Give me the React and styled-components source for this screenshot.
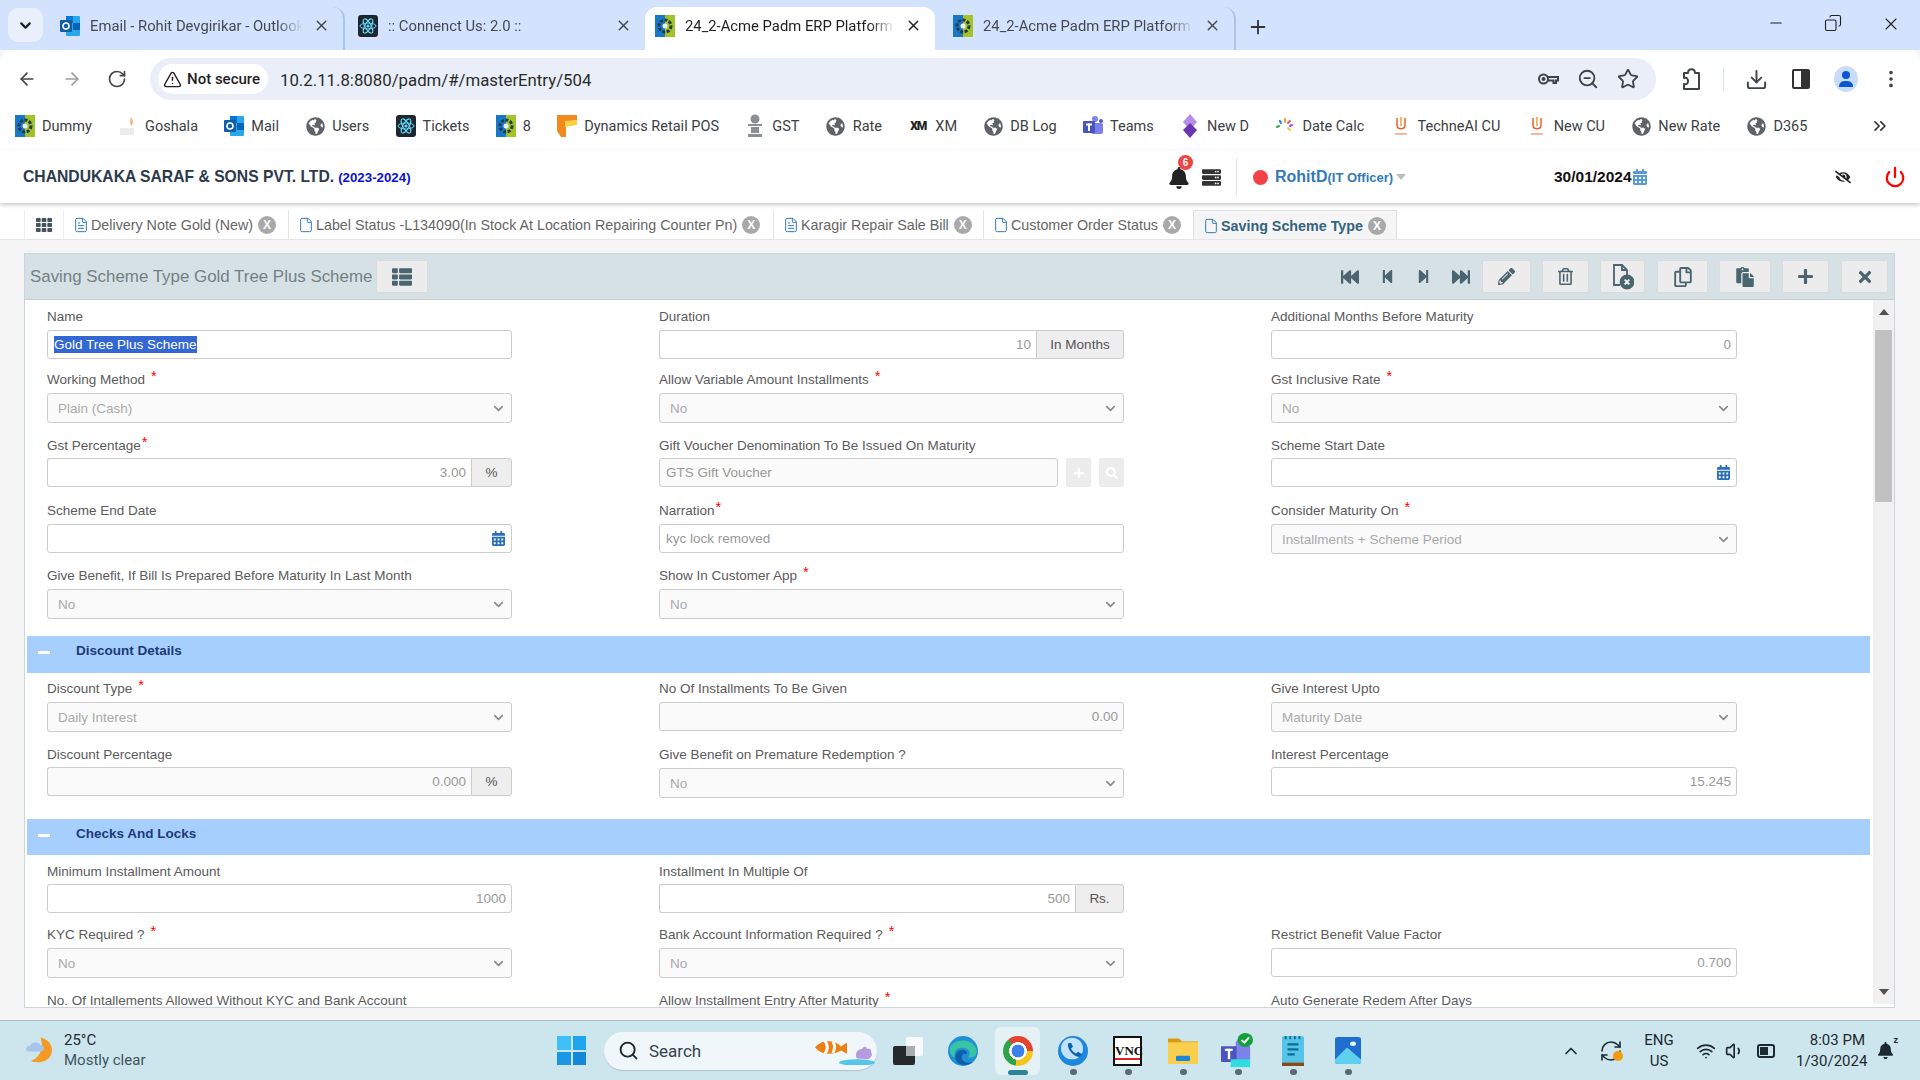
import React from "react";
import styled, { createGlobalStyle } from "styled-components";
import {
  ArrowLeft, ArrowRight, RotateCw, ZoomOut, Star, Download, EllipsisVertical,
  ChevronDown, X, Plus, Minus, Copy, TriangleAlert, ChevronsRight, File, FileText, Power,
  ChevronUp, Wifi, Volume1, Search as SearchGlyph, RefreshCw,
} from "lucide-react";
import {
  FaFastBackward, FaStepBackward, FaStepForward, FaFastForward, FaPencilAlt, FaRegTrashAlt,
  FaRegCopy, FaPaste, FaPlus, FaTimes, FaThList, FaTh, FaBell, FaEyeSlash, FaCalendarAlt,
  FaGlobeAmericas, FaSearch, FaServer,
} from "react-icons/fa";

const GlobalStyle = createGlobalStyle`
  html, body { margin: 0; padding: 0; width: 1920px; height: 1080px; overflow: hidden; background: #f5f5f5; }
  * { box-sizing: border-box; }
  body { font-family: "Liberation Sans", Arial, sans-serif; }
`;

const Page = styled.div`
  width: 1920px;
  height: 1080px;
  display: flex;
  flex-direction: column;
  overflow: hidden;
`;

/* ---------- browser chrome ---------- */

const TabStrip = styled.div`
  height: 50px;
  flex: none;
  background: #d3e3fd;
  display: flex;
  align-items: flex-end;
  font-family: Roboto, sans-serif;
  font-size: 14.8px;
  color: #3c4043;
`;
const TabListButton = styled.div`
  width: 35px;
  height: 34px;
  margin: 0 9px 8px 8px;
  border-radius: 10px;
  background: #e9f0fc;
  display: flex;
  align-items: center;
  justify-content: center;
  color: #1f1f1f;
`;
const BrowserTab = styled.div`
  width: ${(p) => p.$w}px;
  height: 43px;
  flex: none;
  display: flex;
  align-items: center;
  gap: 10px;
  padding: 0 13px 6px ${(p) => p.$pad}px;
  border-radius: 12px 12px 0 0;
  background: ${(p) => (p.$active ? "#fff" : "transparent")};
  color: ${(p) => (p.$active ? "#1f1f1f" : "#45494f")};
  border-right: ${(p) => (p.$sep ? "2px solid #a9c5ef" : "0")};
`;
const BrowserTabTitle = styled.span`
  flex: 1;
  white-space: nowrap;
  overflow: hidden;
  -webkit-mask-image: linear-gradient(to right, #000 88%, transparent);
  mask-image: linear-gradient(to right, #000 88%, transparent);
`;
const NewTab = styled.div`
  margin: 0 0 12px 11px;
  color: #333;
  display: flex;
`;
const WindowControls = styled.div`
  margin-left: auto;
  display: flex;
  gap: 39px;
  padding: 0 19px 16px 0;
  color: #222;
`;
const RestoreIcon = styled(Copy)`
  transform: scaleX(-1);
`;

const Toolbar = styled.div`
  height: 50px;
  flex: none;
  background: #fff;
  border-radius: 12px 12px 0 0;
  display: flex;
  align-items: center;
  padding: 8px 0 0 17px;
  font-family: Roboto, sans-serif;
  color: #444746;
`;
const NavIcons = styled.div`
  display: flex;
  gap: 25px;
  width: 133px;
`;
const Omnibox = styled.div`
  width: 1506px;
  height: 42px;
  border-radius: 21px;
  background: #e9eef8;
  display: flex;
  align-items: center;
  padding: 0 17px 0 8px;
`;
const SecureChip = styled.div`
  width: 110px;
  height: 30px;
  border-radius: 15px;
  background: #fff;
  display: flex;
  align-items: center;
  gap: 5px;
  padding-left: 5px;
  font-size: 15px;
  font-weight: 500;
  color: #1f1f1f;
  white-space: nowrap;
`;
const UrlText = styled.div`
  margin: 1px 0 0 12px;
  font-size: 16.8px;
  color: #2b2b2b;
  flex: 1;
`;
const OmniIcons = styled.div`
  display: flex;
  gap: 18px;
  color: #3f4346;
`;
const ToolbarIcons = styled.div`
  display: flex;
  align-items: center;
  margin-left: 23px;
  gap: 21px;
  color: #3f4346;
`;
const ToolbarSep = styled.div`
  width: 1px;
  height: 24px;
  background: #d7e3f6;
`;
const SidePanelMark = styled.div`
  width: 18px;
  height: 20px;
  margin-left: 3px;
  border: 2px solid #333;
  border-radius: 2px;
  background: linear-gradient(to right, #fff 50%, #333 50%);
`;
const Avatar = styled.div`
  width: 24px;
  height: 26px;
  margin: 0 1px 0 3px;
  border-radius: 50%;
  background: #c8dbfa;
  display: flex;
  align-items: center;
  justify-content: center;
`;

const BookmarkBar = styled.div`
  height: 50px;
  flex: none;
  background: #fff;
  display: flex;
  align-items: center;
  padding: 2px 0 0 15px;
  font-family: Roboto, sans-serif;
  font-size: 14.5px;
  color: #3c4043;
`;
const Bookmark = styled.div`
  display: flex;
  align-items: center;
  gap: 7px;
  margin-right: 26.3px;
  white-space: nowrap;
`;
const BookmarkMark = styled.div`
  width: 20px;
  height: 20px;
  display: flex;
  align-items: center;
  justify-content: center;
  color: #5f6368;
`;
const MoreBookmarks = styled.div`
  margin-left: auto;
  margin-right: 30px;
  display: flex;
  color: #333;
`;

/* ---------- application ---------- */

const AppHeader = styled.header`
  height: 53px;
  flex: none;
  background: #fff;
  box-shadow: 0 2px 4px rgba(0, 0, 0, 0.22);
  position: relative;
  z-index: 2;
  display: flex;
  align-items: center;
  padding-top: 1px;
  & > * {
    flex: none;
  }
`;
const Company = styled.div`
  width: 1168px;
  padding-left: 23px;
  font-size: 15.7px;
  font-weight: 700;
  color: #2d3a4b;
  white-space: nowrap;
`;
const FinYear = styled.span`
  margin-left: 4px;
  font-size: 13.3px;
  color: #0a12d8;
`;
const BellWrap = styled.div`
  position: relative;
  width: 22px;
  display: flex;
  color: #222;
  margin-top: 2px;
`;
const BellBadge = styled.span`
  position: absolute;
  top: -12px;
  left: 10px;
  width: 15px;
  height: 15px;
  border-radius: 50%;
  background: #ef4444;
  color: #fff;
  font-size: 10px;
  font-weight: 700;
  text-align: center;
  line-height: 15px;
`;
const StackIcon = styled(FaServer)`
  margin-left: 12px;
  color: #333;
`;
const HeaderDivider = styled.div`
  width: 1px;
  height: 38px;
  margin: 0 16px 0 15px;
  background: #e6e6e6;
`;
const StatusDot = styled.div`
  width: 15px;
  height: 15px;
  border-radius: 50%;
  background: #f44147;
`;
const UserName = styled.div`
  width: 279px;
  margin-left: 7px;
  display: flex;
  align-items: center;
  white-space: nowrap;
  color: #337ab7;
  font-size: 16px;
  font-weight: 700;
`;
const UserRole = styled.span`
  font-size: 13px;
`;
const Caret = styled.span`
  margin-left: 3px;
  border: 5px solid transparent;
  border-top: 6px solid #bbb;
  border-bottom: 0;
`;
const DateBox = styled.div`
  display: flex;
  align-items: center;
  font-size: 15.5px;
  font-weight: 700;
  color: #111;
  width: 281px;
`;
const DateIcon = styled(FaCalendarAlt)`
  color: #5b9bd5;
`;
const HeaderRight = styled.div`
  display: flex;
  align-items: center;
  gap: 33px;
`;
const EyeIcon = styled(FaEyeSlash)`
  color: #222;
`;

const WorkTabs = styled.nav`
  height: 37px;
  flex: none;
  background: #fff;
  border-bottom: 1px solid #e5e5e5;
  display: flex;
  padding: 7px 0 0 24px;
  font-size: 14.3px;
  color: #666;
`;
const GridCell = styled.div`
  width: 40px;
  display: flex;
  align-items: center;
  justify-content: center;
  border-left: 1px solid #eee;
  border-right: 1px solid #eee;
  color: #44545f;
`;
const WorkTab = styled.div`
  width: ${(p) => p.$w}px;
  flex: none;
  display: flex;
  align-items: center;
  padding: 1px 0 0 11px;
  white-space: nowrap;
  border-right: 1px solid #e5e5e5;
  ${(p) =>
    p.$active &&
    `
    background: #f5f5f5;
    border: 1px solid #e0e0e0;
    border-bottom: 0;
    margin-left: -1px;
    font-weight: 700;
    color: #33637f;
  `}
`;
const WorkTabIcon = styled.span`
  display: flex;
  margin: 0 2px 0 -2px;
  color: #337ab7;
`;
const CloseBadge = styled.span`
  width: 18px;
  height: 18px;
  margin-left: 5px;
  border-radius: 50%;
  background: #a9a9a9;
  color: #fff;
  font-size: 12px;
  font-weight: 700;
  text-align: center;
  line-height: 18px;
`;

const Workspace = styled.main`
  flex: 1;
  min-height: 0;
  background: #f5f5f5;
  padding: 13px 25px 12px 24px;
  display: flex;
`;
const Panel = styled.section`
  flex: 1;
  min-width: 0;
  display: flex;
  flex-direction: column;
  background: #fff;
  border: 1px solid #ccd5db;
`;
const PanelHead = styled.div`
  height: 46px;
  flex: none;
  background: #d6e1e6;
  border-bottom: 1px solid #c5cfc8;
  display: flex;
  align-items: center;
  padding: 0 6px 0 5px;
`;
const PanelTitle = styled.div`
  font-size: 16.9px;
  color: #757f85;
  margin-right: 4px;
  white-space: nowrap;
`;
const HeadButton = styled.div`
  width: ${(p) => p.$w}px;
  height: 33px;
  flex: none;
  display: flex;
  align-items: center;
  justify-content: center;
  background: #ececec;
  border: 1px solid #d9dcdd;
  border-radius: 2px;
  color: #4a6470;
  margin-left: ${(p) => p.$gap || 0}px;
`;
const Pager = styled.div`
  margin-left: auto;
  display: flex;
  align-items: center;
  gap: 21px;
  margin-right: 12px;
  color: #4a6470;
`;
const PanelBody = styled.div`
  flex: 1;
  min-height: 0;
  display: flex;
`;
const FormArea = styled.div`
  flex: 1;
  min-width: 0;
  overflow: hidden;
  padding: 6px 3px 0 2px;
`;
const FieldRow = styled.div`
  height: ${(p) => p.$h}px;
  display: grid;
  grid-template-columns: 465px 465px 466px;
  column-gap: 147px;
  padding-left: 20px;
`;
const Field = styled.div`
  min-width: 0;
`;
const Label = styled.div`
  height: 20px;
  margin-bottom: 4px;
  line-height: 22px;
  font-size: 13.5px;
  color: #5b5b5b;
  white-space: nowrap;
`;
const Required = styled.sup`
  color: #f00;
  font-size: 14.5px;
  line-height: 0;
  margin-left: ${(p) => (p.$tight ? 1 : 6)}px;
  vertical-align: 3px;
`;
const ControlGroup = styled.div`
  display: flex;
  gap: ${(p) => p.$gap || 0}px;
  margin-top: ${(p) => (p.$lift ? -1 : 0)}px;
`;
const Box = styled.div`
  flex: 1;
  min-width: 0;
  height: 29px;
  border: 1px solid #ccc;
  border-radius: ${(p) => (p.$joined ? "3px 0 0 3px" : "3px")};
  border-right: ${(p) => (p.$joined ? "0" : "1px solid #ccc")};
  background: ${(p) => (p.$off ? "#fafafa" : "#fff")};
  display: flex;
  align-items: center;
  justify-content: ${(p) => (p.$right ? "flex-end" : "flex-start")};
  padding: 0 5px 0 ${(p) => (p.$right ? 5 : 6)}px;
  font-size: 13.5px;
  color: #999;
`;
const SelectBox = styled.div`
  height: 30px;
  border: 1px solid #ccc;
  border-radius: 3px;
  background: #fafafa;
  display: flex;
  align-items: center;
  justify-content: space-between;
  padding: 0 5px 0 10px;
  font-size: 13.5px;
  color: #aaa;
`;
const Selected = styled.span`
  background: #3367d1;
  color: #fff;
  line-height: 17px;
`;
const Addon = styled.div`
  width: ${(p) => p.$w}px;
  height: 29px;
  flex: none;
  background: #eee;
  border: 1px solid #ccc;
  border-radius: 0 3px 3px 0;
  display: flex;
  align-items: center;
  justify-content: center;
  font-size: 13.5px;
  color: #555;
`;
const MiniButton = styled.div`
  width: 25px;
  height: 29px;
  flex: none;
  background: #ececec;
  border-radius: 2px;
  display: flex;
  align-items: center;
  justify-content: center;
  color: #fff;
`;
const PickerIcon = styled(FaCalendarAlt)`
  color: #2c6fb5;
  margin-left: auto;
`;
const SectionBar = styled.div`
  height: ${(p) => p.$h}px;
  margin-bottom: ${(p) => p.$after}px;
  background: #a6cffd;
  display: flex;
  padding: 7px 0 0 11px;
  font-size: 13.5px;
  font-weight: 700;
  color: #1e3a78;
`;
const Collapse = styled.span`
  width: 12px;
  height: 3px;
  margin: 8px 26px 0 0;
  background: #fff;
`;
const ScrollTrack = styled.div`
  width: 21px;
  flex: none;
  background: #f1f1f1;
  margin-bottom: 3px;
  display: flex;
  flex-direction: column;
  align-items: center;
`;
const ScrollArrow = styled.div`
  height: 24px;
  flex: none;
  display: flex;
  align-items: center;
  justify-content: center;
  &::before {
    content: "";
    border: 5px solid transparent;
    ${(p) => (p.$down ? "border-top: 6px solid #505050; border-bottom: 0;" : "border-bottom: 6px solid #505050; border-top: 0;")}
  }
`;
const ScrollThumb = styled.div`
  width: 17px;
  height: 172px;
  margin-top: 6px;
  background: #c1c1c1;
`;
const ScrollSpacer = styled.div`
  flex: 1;
`;

/* ---------- windows taskbar ---------- */

const Taskbar = styled.footer`
  height: 60px;
  flex: none;
  background: #cde6ee;
  border-top: 1px solid #a9bcc5;
  display: flex;
  align-items: center;
  font-family: Roboto, sans-serif;
  color: #1c2a30;
`;
const Weather = styled.div`
  width: 557px;
  display: flex;
  align-items: center;
  gap: 10px;
  padding: 0 0 2px 25px;
  font-size: 15px;
  line-height: 20px;
`;
const WeatherSub = styled.div`
  color: #41535b;
`;
const StartMark = styled.div`
  width: 29px;
  height: 29px;
  display: grid;
  grid-template-columns: 1fr 1fr;
  gap: 2px;
  margin-right: 18px;
`;
const StartPane = styled.span`
  background: ${(p) => p.$c};
`;
const SearchBox = styled.div`
  width: 273px;
  height: 38px;
  border-radius: 19px;
  background: #f0f7fa;
  box-shadow: 0 1px 1px rgba(0, 0, 0, 0.15);
  display: flex;
  align-items: center;
  padding: 0 2px 0 14px;
  gap: 10px;
  font-size: 17px;
  color: #33434a;
`;
const SearchWord = styled.span`
  flex: 1;
`;
const AppIcons = styled.div`
  display: flex;
  align-items: center;
  margin-left: 16px;
`;
const TaskView = styled.div`
  display: flex;
  margin-right: 12px;
`;
const AppSlot = styled.div`
  width: ${(p) => (p.$active ? 45 : 55)}px;
  margin: 0 ${(p) => (p.$active ? 5 : 0)}px;
  height: 48px;
  position: relative;
  display: flex;
  align-items: center;
  justify-content: center;
  border-radius: 6px;
  background: ${(p) => (p.$active ? "#e4f1f5" : "transparent")};
  &::after {
    content: "";
    display: ${(p) => (p.$dot ? "block" : "none")};
    position: absolute;
    bottom: 0;
    left: 50%;
    width: ${(p) => (p.$active ? 20 : 7)}px;
    height: ${(p) => (p.$active ? 5 : 6)}px;
    margin-left: ${(p) => (p.$active ? -10 : -3)}px;
    border-radius: 3px;
    background: ${(p) => (p.$active ? "#2b8597" : "#5c6a70")};
  }
`;
const ChromeMark = styled.div`
  width: 30px;
  height: 30px;
  border-radius: 50%;
  background: radial-gradient(circle closest-side, #3d7fe8 0 42%, #fff 44% 58%, transparent 60%),
    conic-gradient(from -40deg, #e5432f 0 130deg, #f5c518 130deg 230deg, #2fa24a 230deg 360deg);
`;
const Tray = styled.div`
  margin-left: 186px;
  display: flex;
  align-items: center;
`;
const TrayIcon = styled.div`
  position: relative;
  display: flex;
  margin-right: ${(p) => p.$gap}px;
`;
const SyncDot = styled.span`
  position: absolute;
  right: 0;
  bottom: 2px;
  width: 10px;
  height: 10px;
  border-radius: 50%;
  background: #f59a0c;
`;
const Lang = styled.div`
  width: 40px;
  margin-right: 17px;
  text-align: center;
  font-size: 15px;
  line-height: 21px;
`;
const BatteryMark = styled.div`
  width: 18px;
  height: 14px;
  border: 2px solid #1c2a30;
  border-radius: 3px;
  background: linear-gradient(to right, #1c2a30 65%, transparent 65%);
  background-clip: content-box;
  padding: 1px;
`;
const Clock = styled.div`
  width: 69px;
  margin-left: 21px;
  text-align: right;
  font-size: 15px;
  line-height: 21px;
  white-space: nowrap;
`;
const QuietBell = styled.div`
  position: relative;
  margin-left: 12px;
  display: flex;
`;
const QuietZ = styled.span`
  position: absolute;
  top: -7px;
  right: -4px;
  font-size: 9px;
  font-weight: 700;
`;

/* ---------- drawn logos ---------- */

const ErpLogo = () => (
  <svg width="20" height="22" viewBox="0 0 20 22">
    <rect width="10" height="22" fill="#1878c8" />
    <rect x="10" width="10" height="22" fill="#a4c32a" />
    <circle cx="10" cy="11" r="6" fill="none" stroke="#213b4d" strokeWidth="3" strokeDasharray="3 1.5" />
    <circle cx="10" cy="11" r="2.5" fill="#e8f2f6" />
  </svg>
);
const ReactLogo = () => (
  <svg width="20" height="22" viewBox="0 0 20 22">
    <rect width="20" height="22" rx="3" fill="#20262e" />
    <g fill="none" stroke="#61dafb" strokeWidth="1">
      <ellipse cx="10" cy="11" rx="8" ry="3" />
      <ellipse cx="10" cy="11" rx="8" ry="3" transform="rotate(60 10 11)" />
      <ellipse cx="10" cy="11" rx="8" ry="3" transform="rotate(120 10 11)" />
    </g>
    <circle cx="10" cy="11" r="1.6" fill="#61dafb" />
  </svg>
);
const OutlookLogo = () => (
  <svg width="20" height="22" viewBox="0 0 20 22">
    <rect x="6" y="1" width="14" height="20" rx="1" fill="#28a8ea" />
    <rect x="6" y="1" width="7" height="7" fill="#0078d4" />
    <rect x="13" y="8" width="7" height="7" fill="#0364b8" />
    <rect y="5" width="12" height="12" rx="1" fill="#0f5ea8" />
    <circle cx="6" cy="11" r="3" fill="none" stroke="#fff" strokeWidth="1.6" />
  </svg>
);
const GoshalaLogo = () => (
  <svg width="20" height="20" viewBox="0 0 20 20">
    <path d="M13 1c3 4 2 7 0 9-1-3-1-6 0-9z" fill="#f3b27a" />
    <rect x="2" y="12" width="14" height="7" fill="#ececec" />
  </svg>
);
const DynamicsLogo = () => (
  <svg width="20" height="24" viewBox="0 0 20 24">
    <path d="M0 1h20v5l-11 2v15H4L0 17z" fill="#f08a1d" />
    <path d="M8 7l12-1v5l-12 2z" fill="#fbd144" />
  </svg>
);
const EmblemLogo = () => (
  <svg width="20" height="24" viewBox="0 0 20 24" fill="#8c8f92">
    <circle cx="10" cy="5" r="4.5" />
    <rect x="3" y="10" width="14" height="2" />
    <rect x="6" y="13" width="8" height="6" />
    <rect x="3" y="20" width="14" height="3" />
  </svg>
);
const XmLogo = styled.span`
  font-size: 12px;
  font-weight: 900;
  letter-spacing: -1px;
  color: #222;
`;
const TeamsLogo = () => (
  <svg width="20" height="22" viewBox="0 0 20 22">
    <circle cx="12" cy="4" r="3" fill="#7b83eb" />
    <circle cx="18" cy="6" r="2" fill="#5059c9" />
    <rect x="8" y="8" width="12" height="11" rx="2" fill="#7b83eb" />
    <rect y="6" width="12" height="12" rx="1" fill="#4b53bc" />
    <rect x="3" y="8.5" width="6" height="2" fill="#fff" />
    <rect x="5" y="8.5" width="2" height="7.5" fill="#fff" />
  </svg>
);
const DiamondLogo = () => (
  <svg width="20" height="24" viewBox="0 0 20 24">
    <path d="M10 0l7 8-7 8-7-8z" fill="#b58ee8" />
    <path d="M10 9l7 7-7 8-7-8z" fill="#6a35b0" />
  </svg>
);
const DotsLogo = () => (
  <svg width="20" height="20" viewBox="0 0 20 20" strokeWidth="2" strokeLinecap="round">
    <path d="M4 10l-2 1" stroke="#3aa655" />
    <path d="M6 7L5 5" stroke="#2f80ed" />
    <path d="M10 6V3" stroke="#f2994a" />
    <path d="M13 7l2-2" stroke="#eb5757" />
    <path d="M15 10l2-1" stroke="#9b51e0" />
    <path d="M13 12l2 2" stroke="#f2c94c" />
  </svg>
);
const CuLogo = () => (
  <svg width="20" height="22" viewBox="0 0 20 22" fill="none">
    <path d="M6 3v7c0 5 8 5 8 0V3" stroke="#e7622e" strokeWidth="1.5" />
    <path d="M10 2v9" stroke="#f0a03a" strokeWidth="1.5" />
    <rect x="4" y="18" width="12" height="2" fill="#f3b9a6" />
  </svg>
);
const GlobeMark = () => <FaGlobeAmericas size={19} />;

const KeyIcon = () => (
  <svg width="22" height="22" viewBox="0 0 22 22" fill="none" stroke="currentColor" strokeWidth="2">
    <circle cx="6.5" cy="11" r="4.5" />
    <circle cx="6.5" cy="11" r="1" />
    <path d="M11 9h10v3.5h-2V15h-2.5v-2.5H11" />
  </svg>
);
const ExtensionIcon = () => (
  <svg width="23" height="24" viewBox="0 0 23 24" fill="none" stroke="currentColor" strokeWidth="2" strokeLinejoin="round">
    <path d="M5 6h4c0-5 7-5 7 0h4v16H5v-5c3 1 4-1 4-3s-1-4-4-3z" />
  </svg>
);
const PersonIcon = () => (
  <svg width="16" height="18" viewBox="0 0 16 18" fill="#0b57d0">
    <circle cx="8" cy="5" r="4" />
    <path d="M1 17c0-5 3-6 7-6s7 1 7 6z" />
  </svg>
);

const WeatherLogo = () => (
  <svg width="29" height="28" viewBox="0 0 30 36" preserveAspectRatio="none">
    <path d="M16 2c10 3 14 13 11 22s-13 12-21 8C15 29 20 15 16 2z" fill="#f59a23" />
    <path d="M4 20c-4 0-4-7 1-7 1-5 9-7 11-1 5 0 5 8 0 8z" fill="#a8c4ea" />
  </svg>
);
const FishLogo = () => (
  <svg width="62" height="29" viewBox="0 0 62 36" preserveAspectRatio="none">
    <ellipse cx="44" cy="33" rx="18" ry="4" fill="#57c5ea" />
    <path d="M44 28c-3-7 1-12 5-12 2-4 5-3 5 0 3-1 5 1 4 4 2 3 0 8-3 9z" fill="#b49ae0" />
    <path d="M2 14C8 4 22 4 28 13l6-5v14l-6-4C20 24 8 24 2 14z" fill="#f07f13" />
    <path d="M12 6c3 5 3 11 0 16M20 7c2 4 2 9 0 14" stroke="#fff" strokeWidth="3" fill="none" />
  </svg>
);
const TaskViewLogo = () => (
  <svg width="30" height="28" viewBox="0 0 30 28">
    <rect x="13" y="0" width="17" height="19" rx="2" fill="#f7f9fa" />
    <rect x="0" y="9" width="22" height="19" rx="2" fill="#26292b" />
    <rect x="13" y="9" width="9" height="10" fill="#a9adaf" />
  </svg>
);
const EdgeLogo = () => (
  <svg width="30" height="30" viewBox="0 0 30 30">
    <circle cx="15" cy="15" r="15" fill="#1f8fd6" />
    <path d="M2 12C5 3 23 1 28 12c3 7-3 11-8 9 3-3 2-8-4-9C9 11 5 16 7 22 3 20 1 16 2 12z" fill="#37c3a4" />
    <path d="M9 26c-4-6 0-12 5-12 4 0 5 2 5 4-4-1-6 1-5 5 1 3 6 5 11 3-5 4-12 4-16 0z" fill="#0e5ea8" />
  </svg>
);
const PhoneLogo = () => (
  <svg width="30" height="30" viewBox="0 0 30 36" preserveAspectRatio="none">
    <ellipse cx="15" cy="18" rx="15" ry="18" fill="#1e86dd" />
    <ellipse cx="14" cy="15" rx="11" ry="13" fill="#bfe3fb" />
    <path d="M10 9l3-1 2 5-2 2c1 3 3 5 5 6l2-2 4 3-2 3c-6 1-13-9-12-16z" fill="#0d5fb0" />
  </svg>
);
const VncLogo = styled.div`
  width: 29px;
  height: 30px;
  background: #fff;
  border: 2px solid #111;
  font-family: "Liberation Serif", serif;
  font-size: 13px;
  font-weight: 700;
  line-height: 26px;
  text-align: center;
  color: #111;
  box-shadow: inset 0 -4px 0 #fff, inset 0 -6px 0 #d22;
`;
const FolderLogo = () => (
  <svg width="30" height="27" viewBox="0 0 30 36" preserveAspectRatio="none">
    <path d="M0 2h11l3 4h16v8H0z" fill="#d69a17" />
    <rect y="7" width="30" height="29" fill="#fbcf4e" />
    <rect x="8" y="25" width="14" height="7" rx="1" fill="#1b86d6" />
  </svg>
);
const TeamsNewLogo = () => (
  <svg width="33" height="35" viewBox="0 0 34 40" preserveAspectRatio="none">
    <circle cx="20" cy="12" r="5" fill="#7b83eb" />
    <rect x="14" y="14" width="16" height="17" rx="2" fill="#7b83eb" />
    <rect y="15" width="16" height="18" rx="1" fill="#4b53bc" />
    <rect x="4" y="18" width="8" height="2.5" fill="#fff" />
    <rect x="7" y="18" width="2.5" height="12" fill="#fff" />
    <rect x="10" y="30" width="20" height="9" fill="#2fdde0" />
    <circle cx="25" cy="8" r="8" fill="#12a03a" />
    <path d="M21 8l3 3 5-6" stroke="#fff" strokeWidth="2" fill="none" />
  </svg>
);
const NotepadLogo = () => (
  <svg width="22" height="30" viewBox="0 0 24 36" preserveAspectRatio="none">
    <rect width="24" height="36" rx="2" fill="#55c4e8" />
    <rect y="32" width="24" height="4" fill="#8a4b13" />
    <path d="M6 10h12M6 16h12M6 22h8" stroke="#0f6d91" strokeWidth="2.5" />
    <path d="M4 0v4M9 0v4M14 0v4M19 0v4" stroke="#0f6d91" strokeWidth="2" />
  </svg>
);
const PhotosLogo = () => (
  <svg width="26" height="27" viewBox="0 0 26 36" preserveAspectRatio="none">
    <rect width="26" height="36" rx="3" fill="#1f6fd0" />
    <circle cx="18" cy="9" r="3" fill="#e8f4ff" />
    <path d="M0 30l12-16 14 16v3a3 3 0 0 1-3 3H3a3 3 0 0 1-3-3z" fill="#5fd0ee" />
  </svg>
);
const FileCancelIcon = () => (
  <svg width="22" height="26" viewBox="0 0 22 26" fill="none" stroke="#4a6470" strokeWidth="1.8">
    <path d="M8 21H2V1h8l5 5v6" />
    <path d="M10 1v5h5" />
    <circle cx="15" cy="18" r="6.5" fill="#4a6470" />
    <path d="M12.7 15.7l4.6 4.6M17.3 15.7l-4.6 4.6" stroke="#fff" />
  </svg>
);

/* ---------- data ---------- */

const browserTabs = [
  { w: 293, pad: 8, logo: <OutlookLogo />, title: "Email - Rohit Devgirikar - Outlook", sep: true },
  { w: 300, pad: 13, logo: <ReactLogo />, title: ":: Connenct Us: 2.0 ::" },
  { w: 290, pad: 10, logo: <ErpLogo />, title: "24_2-Acme Padm ERP Platform", active: true },
  { w: 301, pad: 18, logo: <ErpLogo />, title: "24_2-Acme Padm ERP Platform", sep: true },
];

const bookmarks = [
  { label: "Dummy", mark: <ErpLogo /> },
  { label: "Goshala", mark: <GoshalaLogo /> },
  { label: "Mail", mark: <OutlookLogo /> },
  { label: "Users", mark: <GlobeMark /> },
  { label: "Tickets", mark: <ReactLogo /> },
  { label: "8", mark: <ErpLogo /> },
  { label: "Dynamics Retail POS", mark: <DynamicsLogo /> },
  { label: "GST", mark: <EmblemLogo /> },
  { label: "Rate", mark: <GlobeMark /> },
  { label: "XM", mark: <XmLogo>XM</XmLogo> },
  { label: "DB Log", mark: <GlobeMark /> },
  { label: "Teams", mark: <TeamsLogo /> },
  { label: "New D", mark: <DiamondLogo /> },
  { label: "Date Calc", mark: <DotsLogo /> },
  { label: "TechneAI CU", mark: <CuLogo /> },
  { label: "New CU", mark: <CuLogo /> },
  { label: "New Rate", mark: <GlobeMark /> },
  { label: "D365", mark: <GlobeMark /> },
];

const workTabs = [
  { w: 225, title: "Delivery Note Gold (New)", lined: true },
  { w: 485, title: "Label Status -L134090(In Stock At Location Repairing Counter Pn)" },
  { w: 210, title: "Karagir Repair Sale Bill", lined: true },
  { w: 210, title: "Customer Order Status" },
  { w: 204, title: "Saving Scheme Type", active: true },
];

const sel = (label, value, req) => ({ kind: "select", label, value, req });
const num = (label, value, extra) => ({ kind: "number", label, value, ...extra });

const generalRows = [
  {
    h: 63,
    fields: [
      { kind: "selected", label: "Name", value: "Gold Tree Plus Scheme" },
      num("Duration", "10", { addon: "In Months", addonW: 88 }),
      num("Additional Months Before Maturity", "0"),
    ],
  },
  {
    h: 66,
    fields: [
      sel("Working Method", "Plain (Cash)", true),
      sel("Allow Variable Amount Installments", "No", true),
      sel("Gst Inclusive Rate", "No", true),
    ],
  },
  {
    h: 65,
    lift: true,
    fields: [
      num("Gst Percentage", "3.00", { addon: "%", addonW: 41, req: true, tight: true }),
      { kind: "voucher", label: "Gift Voucher Denomination To Be Issued On Maturity", value: "GTS Gift Voucher" },
      { kind: "date", label: "Scheme Start Date" },
    ],
  },
  {
    h: 65,
    fields: [
      { kind: "date", label: "Scheme End Date" },
      { kind: "text", label: "Narration", value: "kyc lock removed", req: true, tight: true },
      sel("Consider Maturity On", "Installments + Scheme Period", true),
    ],
  },
  {
    h: 71,
    fields: [
      sel("Give Benefit, If Bill Is Prepared Before Maturity In Last Month", "No"),
      sel("Show In Customer App", "No", true),
    ],
  },
];

const discountRows = [
  {
    h: 66,
    fields: [
      sel("Discount Type", "Daily Interest", true),
      num("No Of Installments To Be Given", "0.00", { off: true }),
      sel("Give Interest Upto", "Maturity Date"),
    ],
  },
  {
    h: 75,
    lift: true,
    fields: [
      num("Discount Percentage", "0.000", { addon: "%", addonW: 41, off: true }),
      sel("Give Benefit on Premature Redemption ?", "No"),
      num("Interest Percentage", "15.245"),
    ],
  },
];

const lockRows = [
  {
    h: 63,
    lift: true,
    fields: [
      num("Minimum Installment Amount", "1000"),
      num("Installment In Multiple Of", "500", { addon: "Rs.", addonW: 49 }),
    ],
  },
  {
    h: 66,
    fields: [
      sel("KYC Required ?", "No", true),
      sel("Bank Account Information Required ?", "No", true),
      num("Restrict Benefit Value Factor", "0.700"),
    ],
  },
  {
    h: 40,
    fields: [
      sel("No. Of Intallements Allowed Without KYC and Bank Account", "No"),
      sel("Allow Installment Entry After Maturity", "No", true),
      num("Auto Generate Redem After Days", "0"),
    ],
  },
];

function Control({ f, lift }) {
  if (f.kind === "select") {
    return (
      <SelectBox>
        {f.value}
        <ChevronDown size={15} color="#888" strokeWidth={2.5} />
      </SelectBox>
    );
  }
  if (f.kind === "selected") {
    return (
      <ControlGroup $lift={lift}>
        <Box>
          <Selected>{f.value}</Selected>
        </Box>
      </ControlGroup>
    );
  }
  if (f.kind === "number") {
    return (
      <ControlGroup $lift={lift}>
        <Box $right $joined={!!f.addon} $off={f.off}>
          {f.value}
        </Box>
        {f.addon && <Addon $w={f.addonW}>{f.addon}</Addon>}
      </ControlGroup>
    );
  }
  if (f.kind === "voucher") {
    return (
      <ControlGroup $gap={8} $lift={lift}>
        <Box $off>{f.value}</Box>
        <MiniButton>
          <FaPlus size={12} />
        </MiniButton>
        <MiniButton>
          <FaSearch size={12} />
        </MiniButton>
      </ControlGroup>
    );
  }
  if (f.kind === "date") {
    return (
      <ControlGroup $lift={lift}>
        <Box>
          <PickerIcon size={15} />
        </Box>
      </ControlGroup>
    );
  }
  return (
    <ControlGroup $lift={lift}>
      <Box>{f.value}</Box>
    </ControlGroup>
  );
}

function Rows({ rows }) {
  return rows.map((row) => (
    <FieldRow key={row.fields[0].label} $h={row.h}>
      {row.fields.map((f) => (
        <Field key={f.label}>
          <Label>
            {f.label}
            {f.req && <Required $tight={f.tight}>*</Required>}
          </Label>
          <Control f={f} lift={row.lift} />
        </Field>
      ))}
    </FieldRow>
  ));
}

export default function App() {
  return (
    <Page>
      <GlobalStyle />

      <TabStrip>
        <TabListButton>
          <ChevronDown size={17} strokeWidth={3} />
        </TabListButton>
        {browserTabs.map((t, i) => (
          <BrowserTab key={i} $w={t.w} $pad={t.pad} $active={t.active} $sep={t.sep}>
            {t.logo}
            <BrowserTabTitle>{t.title}</BrowserTabTitle>
            <X size={17} strokeWidth={2} />
          </BrowserTab>
        ))}
        <NewTab>
          <Plus size={22} strokeWidth={2} />
        </NewTab>
        <WindowControls>
          <Minus size={18} strokeWidth={1.5} />
          <RestoreIcon size={18} strokeWidth={1.5} />
          <X size={20} strokeWidth={1.3} />
        </WindowControls>
      </TabStrip>

      <Toolbar>
        <NavIcons>
          <ArrowLeft size={20} />
          <ArrowRight size={20} color="#9a9da0" />
          <RotateCw size={20} />
        </NavIcons>
        <Omnibox>
          <SecureChip>
            <TriangleAlert size={19} strokeWidth={1.8} />
            Not secure
          </SecureChip>
          <UrlText>10.2.11.8:8080/padm/#/masterEntry/504</UrlText>
          <OmniIcons>
            <KeyIcon />
            <ZoomOut size={22} strokeWidth={2} />
            <Star size={22} strokeWidth={2} />
          </OmniIcons>
        </Omnibox>
        <ToolbarIcons>
          <ExtensionIcon />
          <ToolbarSep />
          <Download size={23} />
          <SidePanelMark />
          <Avatar>
            <PersonIcon />
          </Avatar>
          <EllipsisVertical size={22} />
        </ToolbarIcons>
      </Toolbar>

      <BookmarkBar>
        {bookmarks.map((b) => (
          <Bookmark key={b.label}>
            <BookmarkMark>{b.mark}</BookmarkMark>
            {b.label}
          </Bookmark>
        ))}
        <MoreBookmarks>
          <ChevronsRight size={20} />
        </MoreBookmarks>
      </BookmarkBar>

      <AppHeader>
        <Company>
          CHANDUKAKA SARAF &amp; SONS PVT. LTD.
          <FinYear>(2023-2024)</FinYear>
        </Company>
        <BellWrap>
          <FaBell size={22} />
          <BellBadge>6</BellBadge>
        </BellWrap>
        <StackIcon size={19} />
        <HeaderDivider />
        <StatusDot />
        <UserName>
          RohitD
          <UserRole>(IT Officer)</UserRole>
          <Caret />
        </UserName>
        <DateBox>
          30/01/2024
          <DateIcon size={16} />
        </DateBox>
        <HeaderRight>
          <EyeIcon size={16} />
          <Power size={22} color="#f00" strokeWidth={2.5} />
        </HeaderRight>
      </AppHeader>

      <WorkTabs>
        <GridCell>
          <FaTh size={16} />
        </GridCell>
        {workTabs.map((t) => (
          <WorkTab key={t.title} $w={t.w} $active={t.active}>
            <WorkTabIcon>{t.lined ? <FileText size={16} strokeWidth={1.5} /> : <File size={16} strokeWidth={1.5} />}</WorkTabIcon>
            {t.title}
            <CloseBadge>X</CloseBadge>
          </WorkTab>
        ))}
      </WorkTabs>

      <Workspace>
        <Panel>
          <PanelHead>
            <PanelTitle>Saving Scheme Type Gold Tree Plus Scheme</PanelTitle>
            <HeadButton $w={52}>
              <FaThList size={20} />
            </HeadButton>
            <Pager>
              <FaFastBackward size={18} />
              <FaStepBackward size={15} />
              <FaStepForward size={15} />
              <FaFastForward size={18} />
            </Pager>
            <HeadButton $w={49}>
              <FaPencilAlt size={17} />
            </HeadButton>
            <HeadButton $w={47} $gap={11}>
              <FaRegTrashAlt size={17} />
            </HeadButton>
            <HeadButton $w={45} $gap={11}>
              <FileCancelIcon />
            </HeadButton>
            <HeadButton $w={51} $gap={12}>
              <FaRegCopy size={20} />
            </HeadButton>
            <HeadButton $w={52} $gap={11}>
              <FaPaste size={20} />
            </HeadButton>
            <HeadButton $w={47} $gap={11}>
              <FaPlus size={17} />
            </HeadButton>
            <HeadButton $w={47} $gap={12}>
              <FaTimes size={18} />
            </HeadButton>
          </PanelHead>
          <PanelBody>
            <FormArea>
              <Rows rows={generalRows} />
              <SectionBar $h={37} $after={5}>
                <Collapse />
                Discount Details
              </SectionBar>
              <Rows rows={discountRows} />
              <SectionBar $h={36} $after={6}>
                <Collapse />
                Checks And Locks
              </SectionBar>
              <Rows rows={lockRows} />
            </FormArea>
            <ScrollTrack>
              <ScrollArrow />
              <ScrollThumb />
              <ScrollSpacer />
              <ScrollArrow $down />
            </ScrollTrack>
          </PanelBody>
        </Panel>
      </Workspace>

      <Taskbar>
        <Weather>
          <WeatherLogo />
          <div>
            <div>25°C</div>
            <WeatherSub>Mostly clear</WeatherSub>
          </div>
        </Weather>
        <StartMark>
          <StartPane $c="#3fc0f5" />
          <StartPane $c="#1fa4ee" />
          <StartPane $c="#1b96e4" />
          <StartPane $c="#1487d6" />
        </StartMark>
        <SearchBox>
          <SearchGlyph size={21} strokeWidth={2.2} color="#1c2a30" />
          <SearchWord>Search</SearchWord>
          <FishLogo />
        </SearchBox>
        <AppIcons>
          <TaskView>
            <TaskViewLogo />
          </TaskView>
          <AppSlot>
            <EdgeLogo />
          </AppSlot>
          <AppSlot $active $dot>
            <ChromeMark />
          </AppSlot>
          <AppSlot $dot>
            <PhoneLogo />
          </AppSlot>
          <AppSlot $dot>
            <VncLogo>VNC</VncLogo>
          </AppSlot>
          <AppSlot $dot>
            <FolderLogo />
          </AppSlot>
          <AppSlot $dot>
            <TeamsNewLogo />
          </AppSlot>
          <AppSlot $dot>
            <NotepadLogo />
          </AppSlot>
          <AppSlot $dot>
            <PhotosLogo />
          </AppSlot>
        </AppIcons>
        <Tray>
          <TrayIcon $gap={18}>
            <ChevronUp size={20} strokeWidth={2} />
          </TrayIcon>
          <TrayIcon $gap={16}>
            <RefreshCw size={24} strokeWidth={1.6} />
            <SyncDot />
          </TrayIcon>
          <Lang>
            ENG
            <br />
            US
          </Lang>
          <TrayIcon $gap={9}>
            <Wifi size={20} />
          </TrayIcon>
          <TrayIcon $gap={12}>
            <Volume1 size={20} />
          </TrayIcon>
          <BatteryMark />
          <Clock>
            8:03 PM
            <br />
            1/30/2024
          </Clock>
          <QuietBell>
            <FaBell size={17} />
            <QuietZ>z</QuietZ>
          </QuietBell>
        </Tray>
      </Taskbar>
    </Page>
  );
}
